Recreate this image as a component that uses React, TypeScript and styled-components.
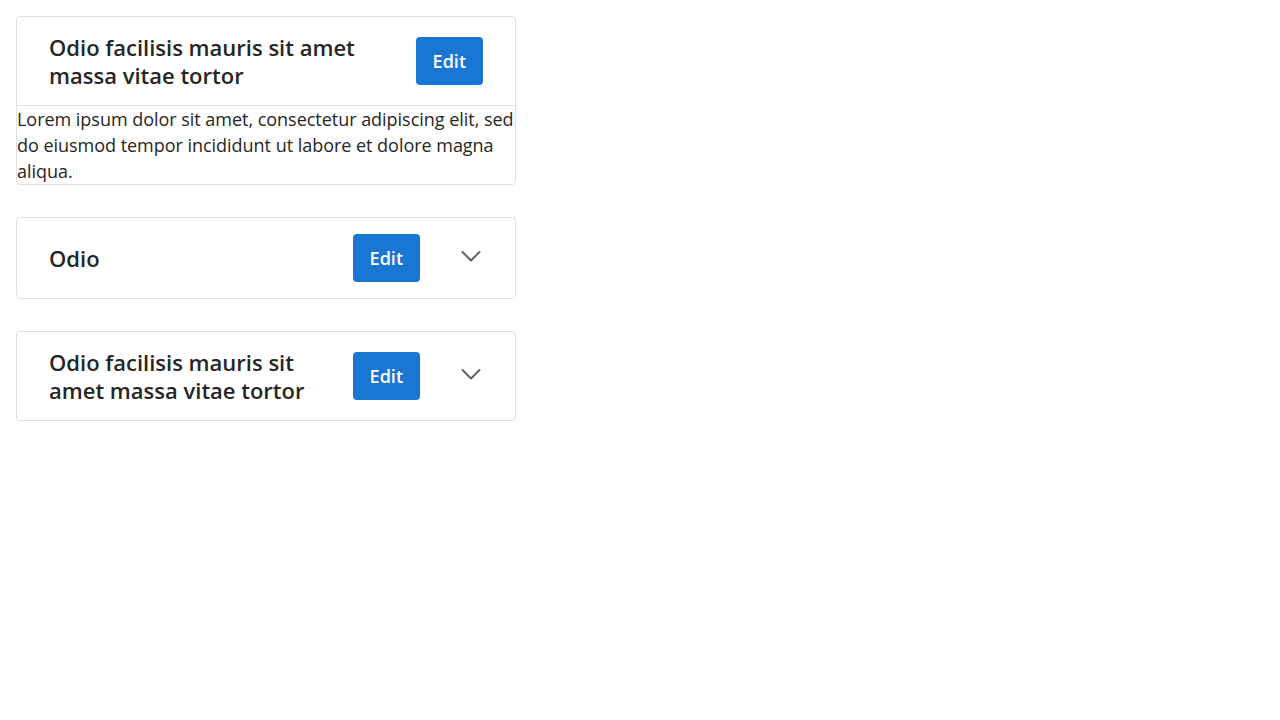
import React from "react";
import styled, { createGlobalStyle } from "styled-components";

const Global = createGlobalStyle`
  html, body { margin: 0; padding: 0; background: #ffffff; }
  body { font-family: "Open Sans", "Noto Sans", sans-serif; color: #242424; }
`;

const Page = styled.div`
  display: flex;
  flex-direction: column;
  gap: 32px;
  padding: 16px;
  width: 500px;
`;

const Card = styled.section`
  border: 1px solid #e0e0e0;
  border-radius: 4px;
  background: #fff;
`;

const Header = styled.div`
  display: flex;
  align-items: center;
  gap: 16px;
  padding: 16px 32px;
`;

const Title = styled.h2`
  flex: 1;
  margin: 0;
  font-size: 22px;
  line-height: 28px;
  font-weight: 600;
  color: #262626;
`;

const Actions = styled.div`
  display: flex;
  align-items: center;
  gap: 39px;
`;

const EditButton = styled.button`
  height: 48px;
  padding: 0 17px;
  border: none;
  border-radius: 4px;
  background: #1976d2;
  color: #fff;
  font-family: "Open Sans", "Noto Sans", sans-serif;
  font-size: 18px;
  font-weight: 600;
  cursor: pointer;
`;

const Chevron = styled.span`
  display: flex;
  width: 24px;
  height: 24px;
  color: #616161;
`;

const Body = styled.div`
  border-top: 1px solid #e0e0e0;
  font-size: 18px;
  line-height: 26px;
  letter-spacing: -0.03px;
  color: #262626;
`;

const ChevronIcon = () => (
  <Chevron>
    <svg width="24" height="24" viewBox="0 0 24 24" fill="none">
      <path d="M3.5 6 L12 14.5 L20.5 6" stroke="currentColor" strokeWidth="2" strokeLinecap="round" strokeLinejoin="round" />
    </svg>
  </Chevron>
);

type PanelProps = { title: string; expandable?: boolean; children?: React.ReactNode };

const Panel = ({ title, expandable, children }: PanelProps) => (
  <Card>
    <Header>
      <Title>{title}</Title>
      <Actions>
        <EditButton>Edit</EditButton>
        {expandable && <ChevronIcon />}
      </Actions>
    </Header>
    {children && <Body>{children}</Body>}
  </Card>
);

export default function App() {
  return (
    <>
      <Global />
      <Page>
        <Panel title="Odio facilisis mauris sit amet massa vitae tortor">
          Lorem ipsum dolor sit amet, consectetur adipiscing elit, sed do eiusmod tempor incididunt ut labore et dolore magna aliqua.
        </Panel>
        <Panel title="Odio" expandable />
        <Panel title="Odio facilisis mauris sit amet massa vitae tortor" expandable />
      </Page>
    </>
  );
}
